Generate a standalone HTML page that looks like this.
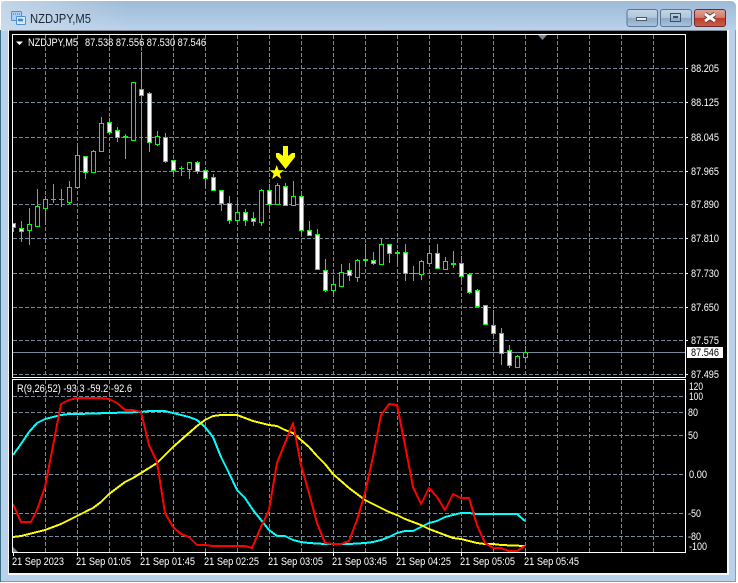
<!DOCTYPE html>
<html><head><meta charset="utf-8"><title>NZDJPY,M5</title>
<style>
html,body{margin:0;padding:0;background:#fff;width:738px;height:583px;overflow:hidden}
svg{display:block}
text{font-family:"Liberation Sans",Arial,sans-serif;font-size:11px;fill:#fff}
.g{stroke:#778899;stroke-width:1;stroke-dasharray:4 2;fill:none;shape-rendering:crispEdges}
.c{stroke:#00ff00;stroke-width:1;shape-rendering:crispEdges}
.l{fill:none;stroke-width:2;stroke-linejoin:round;shape-rendering:crispEdges}
.f{stroke:#fff;stroke-width:1;fill:none;shape-rendering:crispEdges}
</style></head><body>
<svg width="738" height="583" viewBox="0 0 738 583" xmlns="http://www.w3.org/2000/svg">
<defs>
<linearGradient id="tb" x1="0" y1="0" x2="0" y2="1"><stop offset="0" stop-color="#9dbad6"/><stop offset="1" stop-color="#bad2eb"/></linearGradient>
<linearGradient id="tl" x1="0" y1="0" x2="1" y2="0"><stop offset="0" stop-color="#cfdeed" stop-opacity=".75"/><stop offset="1" stop-color="#cfdeed" stop-opacity="0"/></linearGradient>
<linearGradient id="bt" x1="0" y1="0" x2="0" y2="1"><stop offset="0" stop-color="#c3d6e8"/><stop offset=".48" stop-color="#afc6dc"/><stop offset=".52" stop-color="#8ea9c5"/><stop offset="1" stop-color="#a9c4dd"/></linearGradient>
<linearGradient id="cl" x1="0" y1="0" x2="0" y2="1"><stop offset="0" stop-color="#dfa398"/><stop offset=".48" stop-color="#d27c6e"/><stop offset=".52" stop-color="#bd3a28"/><stop offset="1" stop-color="#c9604e"/></linearGradient>
</defs>
<!-- window frame -->
<path d="M1 7Q1 1 7 1H730Q736 1 736 7V582H1Z" fill="#b9d1ea"/>
<path d="M1 7Q1 1 7 1H730Q736 1 736 7V31H1Z" fill="url(#tb)"/>
<rect x="1" y="1" width="130" height="30" fill="url(#tl)"/>
<path d="M0.5 30V582" stroke="#3c6f86" stroke-width="1"/>
<path d="M1 581.5H736M735.5 30V582" stroke="#27c4da" stroke-width="1" shape-rendering="crispEdges"/>
<rect x="8" y="30" width="721" height="545" fill="#f4f8fb"/>
<rect x="9" y="30" width="718" height="543" fill="#000"/>
<rect x="9" y="30" width="718" height="1" fill="#7d8893"/>
<!-- title icon -->
<rect x="11.5" y="11.5" width="10" height="9" rx="1" fill="#a9d0f2" stroke="#4d90d0"/>
<rect x="16.5" y="16.5" width="9" height="8" rx="1" fill="#d6ebfb" stroke="#4d90d0"/>
<path d="M13 14h1M15 14h1M17 14h1M19 14h1M18 21l1-2 1 2 1-2 1 2 1-2" stroke="#2f6fb0" fill="none" stroke-width="1"/>
<text x="30" y="23" textLength="61" lengthAdjust="spacingAndGlyphs" style="font-size:13px;fill:#1c2733">NZDJPY,M5</text>
<!-- buttons -->
<rect x="627" y="9.5" width="30.5" height="17" rx="2.5" fill="url(#bt)" stroke="#5c7590"/>
<rect x="660.5" y="9.5" width="31" height="17" rx="2.5" fill="url(#bt)" stroke="#5c7590"/>
<rect x="694.5" y="9.5" width="31" height="17" rx="2.5" fill="url(#cl)" stroke="#6e2a2a"/>
<rect x="636.5" y="17.5" width="10" height="3" fill="#e9eef3" stroke="#4a5a6c"/>
<rect x="670.5" y="13.5" width="10" height="8" fill="none" stroke="#3f4f60"/>
<rect x="673" y="16" width="5" height="2" fill="#3f4f60"/>
<path d="M705 14l10 7M715 14l-10 7" stroke="#4c2a28" stroke-width="4.5"/>
<path d="M705 14l10 7M715 14l-10 7" stroke="#fff" stroke-width="3"/>
<!-- grid main -->
<path class="g" d="M13 68.5H685M13 102.5H685M13 137.5H685M13 171.5H685M13 204.5H685M13 238.5H685M13 273.5H685M13 307.5H685M13 340.5H685M13 374.5H685"/>
<path class="g" d="M45.5 35V377M77.5 35V377M109.5 35V377M141.5 35V377M173.5 35V377M205.5 35V377M237.5 35V377M269.5 35V377M301.5 35V377M333.5 35V377M365.5 35V377M397.5 35V377M429.5 35V377M461.5 35V377M493.5 35V377M525.5 35V377M557.5 35V377M589.5 35V377M621.5 35V377M653.5 35V377"/>
<path d="M13 352.5H685" stroke="#778899" shape-rendering="crispEdges"/>
<!-- wicks -->
<path class="c" fill="none" d="M13.5 223V232M21.5 221V242M29.5 208V245M37.5 189V226M45.5 196V223M53.5 184V203M61.5 189V207M69.5 181V204M77.5 147V187M85.5 156V179M93.5 150V172M101.5 117V152M109.5 118V135M117.5 127V142M125.5 134V159M141.5 52V207M149.5 92V152M157.5 131V146M165.5 133V163M173.5 160V174M181.5 166V176M189.5 162V179M197.5 161V174M205.5 170V188M213.5 174V190M221.5 190V211M229.5 196V224M237.5 200V220M245.5 209V226M253.5 212V226M261.5 189V226M269.5 184V213M277.5 183V204M285.5 183V205M293.5 181V206M301.5 194V235M309.5 221V236M317.5 229V269M325.5 259V292M333.5 278V295M341.5 264V286M349.5 263V281M357.5 259V282M365.5 244V267M373.5 252V265M381.5 239V265M389.5 244V263M397.5 250V265M405.5 244V281M413.5 266V281M421.5 260V280M429.5 246V265M437.5 244V268M445.5 257V270M453.5 251V268M461.5 256V281M469.5 273V294M477.5 289V307M485.5 305V324M493.5 310V336M501.5 328V365M509.5 345V368M517.5 355V367M525.5 346V361"/>
<!-- doji -->
<path class="c" fill="none" d="M51 199.5h5M59 199.5h5M123 137.5h5M123 136.5h5M179 168.5h5M363 260.5h5M363 259.5h5M395 253.5h5M395 252.5h5M411 273.5h5M451 264.5h5M451 263.5h5"/>
<!-- bull bodies -->
<path class="c" fill="#000" d="M27.5 224.5h4v6h-4zM35.5 206.5h4v20h-4zM43.5 199.5h4v9h-4zM67.5 187.5h4v15h-4zM75.5 155.5h4v32h-4zM91.5 151.5h4v21h-4zM99.5 123.5h4v28h-4zM131.5 82.5h4v58h-4zM155.5 136.5h4v8h-4zM187.5 162.5h4v7h-4zM235.5 212.5h4v8h-4zM259.5 190.5h4v32h-4zM275.5 185.5h4v19h-4zM291.5 196.5h4v9h-4zM331.5 284.5h4v6h-4zM339.5 272.5h4v14h-4zM355.5 260.5h4v17h-4zM379.5 244.5h4v20h-4zM419.5 261.5h4v13h-4zM427.5 253.5h4v10h-4zM443.5 261.5h4v8h-4zM515.5 356.5h4v11h-4zM523.5 352.5h4v5h-4z"/>
<!-- bear bodies -->
<path class="c" fill="#fff" d="M12.5 223.5h3v4h-3zM19.5 228.5h4v3h-4zM83.5 156.5h4v16h-4zM107.5 122.5h4v10h-4zM115.5 130.5h4v7h-4zM139.5 89.5h4v6h-4zM147.5 93.5h4v49h-4zM163.5 137.5h4v24h-4zM171.5 160.5h4v10h-4zM195.5 162.5h4v9h-4zM203.5 170.5h4v8h-4zM211.5 177.5h4v13h-4zM219.5 190.5h4v13h-4zM227.5 203.5h4v17h-4zM243.5 212.5h4v8h-4zM251.5 218.5h4v3h-4zM267.5 190.5h4v14h-4zM283.5 186.5h4v19h-4zM299.5 196.5h4v34h-4zM307.5 230.5h4v5h-4zM315.5 234.5h4v35h-4zM323.5 270.5h4v20h-4zM347.5 270.5h4v5h-4zM371.5 260.5h4v3h-4zM387.5 244.5h4v9h-4zM403.5 252.5h4v21h-4zM435.5 253.5h4v15h-4zM459.5 263.5h4v13h-4zM467.5 274.5h4v18h-4zM475.5 290.5h4v16h-4zM483.5 305.5h4v19h-4zM491.5 325.5h4v8h-4zM499.5 333.5h4v20h-4zM507.5 350.5h4v15h-4z"/>
<!-- arrow + star -->
<path d="M283 146H288V156L292 153L295 153V157L285.5 169L276 157V153L279 153L283 156Z" fill="#ffff00"/>
<path d="M276.7 165L278.6 170.2L284 170.2L279.7 173.6L281.3 179L276.7 175.8L272.1 179L273.7 173.6L269.6 170.2L274.8 170.2Z" fill="#ffff00"/>
<!-- grid sub -->
<path class="g" d="M13 396.5H685M13 412.5H685M13 435.5H685M13 474.5H685M13 513.5H685M13 536.5H685"/>
<path class="g" d="M45.5 380V552M77.5 380V552M109.5 380V552M141.5 380V552M173.5 380V552M205.5 380V552M237.5 380V552M269.5 380V552M301.5 380V552M333.5 380V552M365.5 380V552M397.5 380V552M429.5 380V552M461.5 380V552M493.5 380V552M525.5 380V552M557.5 380V552M589.5 380V552M621.5 380V552M653.5 380V552"/>
<!-- indicator lines -->
<polyline class="l" stroke="#00ffff" points="13,455 21,444 29,432 37,423 45,419 53,417 61,415 69,414 77,414 141,412 149,411 165,411 173,413 181,415 189,417 197,420 205,427 213,437 221,457 229,473 237,490 245,498 253,510 261,520 269,530 277,536 285,536 293,540 301,542 309,543 325,544 349,544 365,543 373,542 381,540 389,537 397,533 405,531 413,531 421,527 429,523 437,521 445,517 453,515 461,513 469,513 477,514 517,514 525,521"/>
<polyline class="l" stroke="#ffff00" points="13,537 21,536 29,534 37,532 45,530 53,527 61,524 69,520 77,516 85,512 93,508 101,502 109,494 117,488 125,482 133,478 141,473 149,468 157,463 165,455 173,447 181,440 189,433 197,426 205,420 213,416 221,415 237,415 245,418 253,421 261,423 269,425 277,426 285,430 293,433 301,440 309,447 317,456 325,464 333,474 341,481 349,488 357,494 365,500 373,504 381,508 389,512 397,515 405,519 413,522 421,525 429,529 437,532 445,535 453,538 461,539 469,541 477,543 485,544 493,544 501,545 525,546"/>
<polyline class="l" stroke="#ff0000" points="13,504 21,522 31,522 37,510 45,487 53,446 61,404 69,400 77,398 101,398 109,399 117,403 125,410 133,410 141,412 149,445 157,462 165,513 173,527 181,534 189,537 197,545 205,545 213,546 237,546 245,546 252,548 261,527 269,510 277,463 285,443 293,423 301,465 309,493 317,523 325,543 333,544 341,544 349,541 357,520 365,493 373,457 381,415 389,404 397,405 405,445 413,487 421,504 429,488 437,497 445,510 453,494 461,498 469,498 477,525 485,543 493,548 501,548 509,551 517,551 525,546"/>
<!-- frames -->
<path class="f" d="M12.5 34.5H685.5V377.5H12.5ZM12.5 379.5H685.5V552.5H12.5Z"/>
<path class="f" d="M685 68.5h3M685 102.5h3M685 137.5h3M685 171.5h3M685 204.5h3M685 238.5h3M685 273.5h3M685 307.5h3M685 340.5h3M685 374.5h3M13.5 553v3M77.5 553v3M141.5 553v3M205.5 553v3M269.5 553v3M333.5 553v3M397.5 553v3M461.5 553v3M525.5 553v3"/>
<path d="M538 35H547L542.5 40Z" fill="#778899"/>
<path d="M13 547L18 552H13Z" fill="#778899"/>
<path d="M16 41.5H23L19.5 45Z" fill="#fff"/>
<!-- labels -->
<text x="28" y="46" textLength="50" lengthAdjust="spacingAndGlyphs">NZDJPY,M5</text>
<text x="85" y="46" textLength="121" lengthAdjust="spacingAndGlyphs">87.538 87.556 87.530 87.546</text>
<text x="17" y="392" textLength="115" lengthAdjust="spacingAndGlyphs">R(9,26,52) -93.3 -59.2 -92.6</text>
<rect x="687" y="347" width="36" height="11" fill="#fff"/>
<text x="691" y="72" textLength="28" lengthAdjust="spacingAndGlyphs">88.205</text>
<text x="691" y="106" textLength="28" lengthAdjust="spacingAndGlyphs">88.125</text>
<text x="691" y="141" textLength="28" lengthAdjust="spacingAndGlyphs">88.045</text>
<text x="691" y="175" textLength="28" lengthAdjust="spacingAndGlyphs">87.965</text>
<text x="691" y="208" textLength="28" lengthAdjust="spacingAndGlyphs">87.890</text>
<text x="691" y="242" textLength="28" lengthAdjust="spacingAndGlyphs">87.810</text>
<text x="691" y="277" textLength="28" lengthAdjust="spacingAndGlyphs">87.730</text>
<text x="691" y="311" textLength="28" lengthAdjust="spacingAndGlyphs">87.650</text>
<text x="691" y="344" textLength="28" lengthAdjust="spacingAndGlyphs">87.575</text>
<text x="691" y="356" textLength="28" lengthAdjust="spacingAndGlyphs" style="fill:#000">87.546</text>
<text x="691" y="378" textLength="28" lengthAdjust="spacingAndGlyphs">87.495</text>
<text x="689" y="390" textLength="14" lengthAdjust="spacingAndGlyphs">120</text>
<text x="689" y="400" textLength="14" lengthAdjust="spacingAndGlyphs">100</text>
<text x="688" y="416" textLength="10" lengthAdjust="spacingAndGlyphs">80</text>
<text x="688" y="439" textLength="10" lengthAdjust="spacingAndGlyphs">50</text>
<text x="689" y="478" textLength="18" lengthAdjust="spacingAndGlyphs">0.00</text>
<text x="688" y="517" textLength="13" lengthAdjust="spacingAndGlyphs">-50</text>
<text x="688" y="540" textLength="13" lengthAdjust="spacingAndGlyphs">-80</text>
<text x="689" y="550" textLength="18" lengthAdjust="spacingAndGlyphs">-100</text>
<text x="12" y="565" textLength="52" lengthAdjust="spacingAndGlyphs">21 Sep 2023</text>
<text x="76" y="565" textLength="55" lengthAdjust="spacingAndGlyphs">21 Sep 01:05</text>
<text x="140" y="565" textLength="55" lengthAdjust="spacingAndGlyphs">21 Sep 01:45</text>
<text x="204" y="565" textLength="55" lengthAdjust="spacingAndGlyphs">21 Sep 02:25</text>
<text x="268" y="565" textLength="55" lengthAdjust="spacingAndGlyphs">21 Sep 03:05</text>
<text x="332" y="565" textLength="55" lengthAdjust="spacingAndGlyphs">21 Sep 03:45</text>
<text x="396" y="565" textLength="55" lengthAdjust="spacingAndGlyphs">21 Sep 04:25</text>
<text x="460" y="565" textLength="55" lengthAdjust="spacingAndGlyphs">21 Sep 05:05</text>
<text x="524" y="565" textLength="55" lengthAdjust="spacingAndGlyphs">21 Sep 05:45</text>
</svg>
</body></html>
